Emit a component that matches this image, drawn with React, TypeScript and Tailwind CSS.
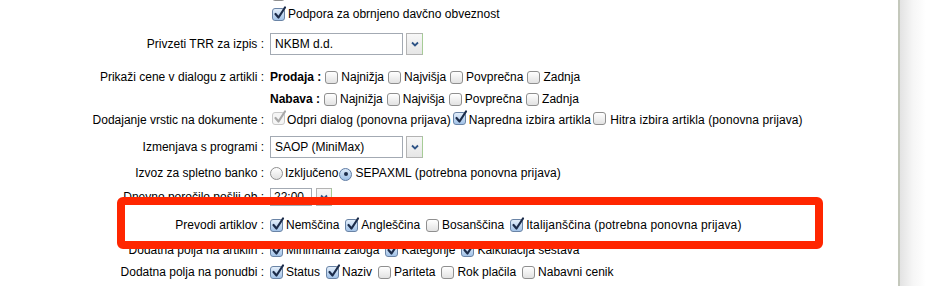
import React from 'react';

const Check = ({ checked, disabled }: { checked?: boolean; disabled?: boolean }) => (
  <span
    className={`relative inline-block h-[13px] w-[13px] shrink-0 rounded-[3px] border ${
      disabled
        ? 'border-[#c9c9c9] bg-[#f5f5f5]'
        : checked
        ? 'border-[#6a84a6] bg-gradient-to-b from-[#e3eefa] to-[#a3c3e8]'
        : 'border-[#8f8f8f] bg-gradient-to-b from-white to-[#e2e2e2]'
    }`}
  >
    {checked && (
      <svg className="absolute -top-[3px] left-[0px] overflow-visible" width="14" height="14" viewBox="0 0 14 14">
        <path
          d="M2.5 8 L5.5 11.5 L12 1.5"
          fill="none"
          stroke={disabled ? '#a8a8a8' : '#1c2c4a'}
          strokeWidth="2.2"
          strokeLinecap="round"
          strokeLinejoin="round"
        />
      </svg>
    )}
  </span>
);

const Radio = ({ on }: { on?: boolean }) => (
  <span
    className={`inline-flex h-[13px] w-[13px] shrink-0 items-center justify-center rounded-full border ${
      on ? 'border-[#5d7aa3] bg-gradient-to-b from-[#dceaf9] to-[#9dbfe6]' : 'border-[#8f8f8f] bg-gradient-to-b from-white to-[#e2e2e2]'
    }`}
  >
    {on && <span className="h-[4px] w-[4px] rounded-full bg-[#1c2c4a]" />}
  </span>
);

const Opt = ({ label, checked }: { label: string; checked?: boolean }) => (
  <span className="flex items-center">
    <Check checked={checked} />
    <span className="ml-[3px] whitespace-nowrap">{label}</span>
  </span>
);

const Chevron = () => (
  <svg width="8" height="6" viewBox="0 0 8 6">
    <path d="M1 1.5 L4 4.5 L7 1.5" fill="none" stroke="#2f5486" strokeWidth="1.8" />
  </svg>
);

const Select = ({ value }: { value: string }) => (
  <span className="flex items-center">
    <span className="flex h-[22px] w-[133px] items-center border border-[#a3aab3] bg-white pl-[4px]">{value}</span>
    <span className="ml-[3px] flex h-[22px] w-[17px] items-center justify-center border border-[#b3b3b3] border-r-[#a6cc96] bg-gradient-to-b from-[#f7f7f7] to-[#e6e6e6]">
      <Chevron />
    </span>
  </span>
);

const Row = ({ label, h, children }: { label: string; h: string; children?: React.ReactNode }) => (
  <div className={h}>
    <div className="flex h-[20px] items-center">
      <div className="w-[264px] shrink-0 whitespace-nowrap text-right">{label}</div>
      <div className="ml-[6px] flex items-center">{children}</div>
    </div>
  </div>
);

const App = () => {
  return (
    <div className="relative flex h-[286px] w-[926px] overflow-hidden bg-white font-['Liberation_Sans',Arial,sans-serif] text-[12px] leading-[15px] text-black">
      <div className="w-[900px] shrink-0 border-r-2 border-[#c4c8bc]">
        <div className="-mt-[14px]">
          <Row label="" h="h-[18px]">
            <span className="ml-[2px]"><Check /></span>
          </Row>
          <Row label="" h="h-[30px]">
            <span className="ml-[2px] flex items-center">
              <Check checked />
              <span className="ml-[3px]">Podpora za obrnjeno davčno obveznost</span>
            </span>
          </Row>
          <Row label="Privzeti TRR za izpis :" h="h-[33px]">
            <Select value="NKBM d.d." />
          </Row>
          <Row label="Prikaži cene v dialogu z artikli :" h="h-[22px]">
            <span className="flex items-center gap-[4px]">
              <b>Prodaja :</b>
              <Opt label="Najnižja" />
              <Opt label="Najvišja" />
              <Opt label="Povprečna" />
              <Opt label="Zadnja" />
            </span>
          </Row>
          <Row label="" h="h-[21px]">
            <span className="flex items-center gap-[4px]">
              <b>Nabava :</b>
              <Opt label="Najnižja" />
              <Opt label="Najvišja" />
              <Opt label="Povprečna" />
              <Opt label="Zadnja" />
            </span>
          </Row>
          <Row label="Dodajanje vrstic na dokumente :" h="h-[27px]">
            <span className="flex items-center tracking-[0.1px]">
              <span className="ml-[2px]"><Check checked disabled /></span>
              <span className="ml-[2px]">Odpri dialog (ponovna prijava)</span>
              <span className="ml-[2px]"><Check checked /></span>
              <span className="ml-[3px]">Napredna izbira artikla</span>
              <span className="ml-[2px]"><Check /></span>
              <span className="ml-[4px]">Hitra izbira artikla (ponovna prijava)</span>
            </span>
          </Row>
          <Row label="Izmenjava s programi :" h="h-[26px]">
            <Select value="SAOP (MiniMax)" />
          </Row>
          <Row label="Izvoz za spletno banko :" h="h-[24px]">
            <span className="flex items-center">
              <Radio />
              <span className="ml-[2px]">Izključeno</span>
              <span className="ml-[1px]"><Radio on /></span>
              <span className="ml-[3px] tracking-[0.1px]">SEPAXML (potrebna ponovna prijava)</span>
            </span>
          </Row>
          <Row label="Dnevno poročilo pošlji ob :" h="h-[28px]">
            <span className="flex items-center">
              <span className="flex h-[18px] w-[42px] items-center border border-[#a3aab3] bg-white pl-[3px]">22:00</span>
              <span className="ml-[4px] flex h-[18px] w-[16px] items-center justify-center border border-[#b3b3b3] border-r-[#a6cc96] bg-gradient-to-b from-[#f7f7f7] to-[#e6e6e6]">
                <Chevron />
              </span>
            </span>
          </Row>
          <Row label="Prevodi artiklov :" h="h-[25px]">
            <span className="flex items-center gap-[6px]">
              <Opt label="Nemščina" checked />
              <Opt label="Angleščina" checked />
              <Opt label="Bosanščina" />
              <span className="tracking-[0.15px]">
                <Opt label="Italijanščina (potrebna ponovna prijava)" checked />
              </span>
            </span>
          </Row>
          <Row label="Dodatna polja na artiklih :" h="h-[22px]">
            <span className="flex items-center gap-[6px]">
              <Opt label="Minimalna zaloga" checked />
              <Opt label="Kategorije" checked />
              <Opt label="Kalkulacija sestava" checked />
            </span>
          </Row>
          <Row label="Dodatna polja na ponudbi :" h="h-[22px]">
            <span className="flex items-center gap-[6px]">
              <Opt label="Status" checked />
              <Opt label="Naziv" checked />
              <Opt label="Pariteta" />
              <Opt label="Rok plačila" />
              <Opt label="Nabavni cenik" />
            </span>
          </Row>
        </div>
      </div>
      <div className="flex-1 bg-gradient-to-r from-[#e3e3e3] via-[#f6f6f6] to-white" />

      {/* annotation frame */}
      <div className="pointer-events-none absolute left-[117px] top-[197px] h-[52px] w-[706px] rounded-[6px] border-[8px] border-[#ff2600]" />
    </div>
  );
};

export default App;
